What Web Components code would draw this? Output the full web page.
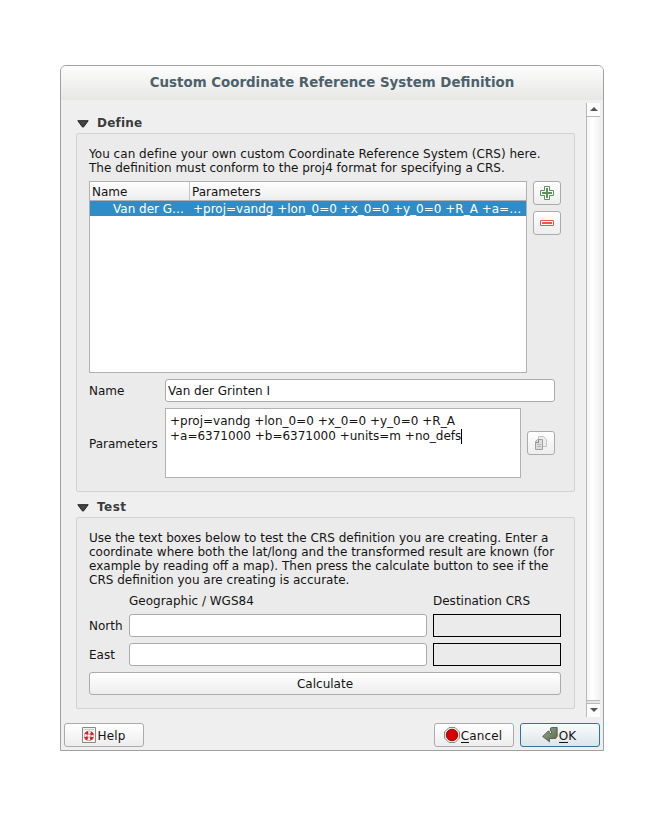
<!DOCTYPE html>
<html lang="en"><head><meta charset="utf-8"><title>Custom Coordinate Reference System Definition</title>
<style>
html,body{margin:0;background:#fff}
body{width:658px;height:816px;font:12px/14px "DejaVu Sans",sans-serif;color:#141414;box-sizing:border-box;padding:65px 0 0 60px;overflow:hidden}
.main{display:flex;height:618px;box-sizing:content-box;padding:2px 3px 0 15px;justify-content:space-between}
.content{width:499px;display:flex;flex-direction:column}
.line{display:block;white-space:nowrap;width:max-content}
.listrow{display:flex;gap:6px;margin-top:6px}
.side{display:flex;flex-direction:column;gap:6px}
.r{display:flex;align-items:center}
.r>.lab{flex:none;white-space:nowrap}
.foot{display:flex;padding:3px;gap:6px}
.foot .sp{flex:1}
.foot crs-button>span{padding:2px 1px 0 0;letter-spacing:.1px}
u{text-decoration:none;border-bottom:1px solid #141414;display:inline-block;height:13px}
</style></head><body>
<crs-window heading="Custom Coordinate Reference System Definition">
 <div class="main">
  <div class="content">
   <crs-group heading="Define" style="--h:359px">
    <span class="line" style="letter-spacing:.03px">You can define your own custom Coordinate Reference System (CRS) here.</span>
    <span class="line">The definition must conform to the proj4 format for specifying a CRS.</span>
    <div class="listrow">
     <crs-list></crs-list>
     <div class="side">
      <crs-button style="width:28px"><crs-icon name="plus"></crs-icon></crs-button>
      <crs-button style="width:28px"><crs-icon name="minus"></crs-icon></crs-button>
     </div>
    </div>
    <div class="r" style="margin-top:6px"><span class="lab" style="width:76px">Name</span><crs-field style="width:390px">Van der Grinten I</crs-field></div>
    <div class="r" style="margin-top:6px"><span class="lab" style="width:76px;padding-top:1px;box-sizing:border-box">Parameters</span><crs-text>
      <span class="line">+proj=vandg +lon_0=0 +x_0=0 +y_0=0 +R_A</span><span class="line">+a=6371000 +b=6371000 +units=m +no_defs</span></crs-text>
     <crs-button style="width:28px;margin-left:6px"><crs-icon name="copy"></crs-icon></crs-button></div>
   </crs-group>
   <crs-group heading="Test" style="--h:192px;margin-top:9px">
    <span class="line">Use the text boxes below to test the CRS definition you are creating. Enter a</span>
    <span class="line">coordinate where both the lat/long and the transformed result are known (for</span>
    <span class="line">example by reading off a map). Then press the calculate button to see if the</span>
    <span class="line">CRS definition you are creating is accurate.</span>
    <div class="r" style="margin-top:7px"><span class="lab" style="width:304px;padding-left:40px">Geographic / WGS84</span><span class="lab">Destination CRS</span></div>
    <div class="r" style="margin-top:6px"><span class="lab" style="width:40px">North</span><crs-field style="width:298px"></crs-field><crs-field readonly style="width:128px;margin-left:6px"></crs-field></div>
    <div class="r" style="margin-top:6px"><span class="lab" style="width:40px">East</span><crs-field style="width:298px"></crs-field><crs-field readonly style="width:128px;margin-left:6px"></crs-field></div>
    <crs-button style="width:472px;height:23px;margin-top:6px">Calculate</crs-button>
   </crs-group>
  </div>
  <crs-scroll></crs-scroll>
 </div>
 <div class="foot">
  <crs-button style="width:80px"><crs-icon name="help"></crs-icon><span>Help</span></crs-button><span class="sp"></span>
  <crs-button style="width:80px"><crs-icon name="cancel"></crs-icon><span><u>C</u>ancel</span></crs-button>
  <crs-button primary style="width:80px"><crs-icon name="ok"></crs-icon><span><u>O</u>K</span></crs-button>
 </div>
</crs-window>
<script>
const define=(name,render)=>customElements.define(name,class extends HTMLElement{
 constructor(){super();this.attachShadow({mode:'open'}).innerHTML=render(this)}
});
define('crs-window',e=>`<style>
:host{display:block;box-sizing:border-box;width:544px;height:686px;border:1px solid #a0a0a0;border-radius:6px 6px 0 0;background:#efefef;overflow:hidden}
header{height:34px;box-sizing:border-box;padding-bottom:1px;background:linear-gradient(#fdfdfd,#e7e7e5);display:flex;align-items:center;justify-content:center;font-weight:bold;font-size:13.38px;color:#4b616c}
</style><header>${e.getAttribute('heading')}</header><slot></slot>`);
define('crs-group',e=>`<style>
:host{display:block}
h2{margin:0;height:31px;font-size:12px;letter-spacing:.2px;line-height:14px;display:flex;align-items:center;box-sizing:border-box;padding:10px 0 0 1px;gap:8px;color:#3b3b3b}
h2 svg{margin-top:2px}
:host([heading=Test]) h2{height:16px;padding-top:0;padding-bottom:4px}
:host([heading=Test]) h2 span{letter-spacing:.5px}
section{box-sizing:border-box;height:var(--h);border:1px solid #d2d2d2;border-radius:2px;background:#ebebeb;padding:13px 12px 0;white-space:nowrap}
</style><h2><svg width="12" height="8"><path d="M.8.7H11.2L6.8 6.7Q6 7.6 5.2 6.7Z" fill="#444" stroke="#222"/></svg><span>${e.getAttribute('heading')}</span></h2><section><slot></slot></section>`);
define('crs-list',()=>`<style>
:host{display:block;box-sizing:border-box;width:438px;height:192px;background:#fff;border:1px solid #b1b1b1}
div{display:grid;grid-template-columns:100px 1fr;line-height:15px}
.h{height:18px;background:linear-gradient(#fff,#ededed);border-bottom:1px solid #b1b1b1}
.h span{padding:3px 0 0 2px;height:15px}.h span:first-child{border-right:1px solid #c4c4c4}
.s{background:#308cc6;color:#fff;height:15px;line-height:17px}
.s span{white-space:nowrap}.s span:first-child{padding-left:23px}.s span:last-child{padding-left:3px}
</style><div class="h"><span>Name</span><span>Parameters</span></div><div class="s"><span>Van der G…</span><span>+proj=vandg +lon_0=0 +x_0=0 +y_0=0 +R_A +a=…</span></div>`);
define('crs-button',()=>`<style>
:host{display:flex;flex:none;box-sizing:border-box;height:24px;border:1px solid #ababab;border-radius:3px;background:linear-gradient(#fff,#ededed);align-items:center;justify-content:center;gap:1px}
:host([primary]){border-color:#2a77a6;background:linear-gradient(#f9fbfc,#dce5ea)}
</style><slot></slot>`);
define('crs-field',()=>`<style>
:host{display:block;flex:none;box-sizing:border-box;height:23px;border:1px solid #ababab;border-radius:3px;background:#fff;padding:4px 2px}
:host([readonly]){border:1px solid #000;border-radius:0;background:#ebebeb}
</style><slot></slot>`);
define('crs-text',()=>`<style>
:host{display:block;flex:none;box-sizing:border-box;width:356px;height:70px;border:1px solid #b1b1b1;background:#fff;padding:5px 4px;line-height:15px}
::slotted(span:last-child){border-right:1px solid #000}
</style><slot></slot>`);
define('crs-scroll',()=>`<style>
:host{display:flex;flex-direction:column;box-sizing:border-box;width:14px;height:614px;margin-top:1px;border-left:1px solid #b9b9b9;background:linear-gradient(90deg,#f4f4f4,#fff 40%,#f2f2f2)}
.c{height:13px;box-sizing:border-box;padding-bottom:2px;display:flex;align-items:center;justify-content:center;background:#fcfcfc}
.t{flex:1;border:solid #b9b9b9;border-width:1px 0}.g{height:2px;background:#e6e6e6;border-bottom:1px solid #b9b9b9}
</style><div class="c"><svg width="8" height="4"><path d="M0 4L4 0L8 4Z" fill="#555"/></svg></div><div class="t"></div><div class="g"></div><div class="c"><svg width="8" height="4"><path d="M0 0H8L4 4Z" fill="#555"/></svg></div>`);
const icons={
plus:`<path d="M5.500 1.500h5v4h4v5h-4v4h-5v-4h-4v-5h4z" fill="#fff" stroke="#5c905c"/><path d="M8 3v10M3 8h10" stroke="#5c905c" stroke-width="2"/>`,
minus:`<path d="M1.500 5.500h13v5h-13z" fill="#fff" stroke="#e55"/><path d="M3 8h10" stroke="#e55" stroke-width="2"/>`,
copy:`<path d="M5.500 1.500h5l3 3v7h-8z" fill="#eee" stroke="#c4c4c4"/><path d="M2.500 6.500l2-2h5v10h-7z" fill="#ddd" stroke="#a0a0a0"/><path d="M5.500 5v2.500H3" fill="none" stroke="#888"/><path d="M4 9.500h4M4 11.500h4" fill="none" stroke="#b5b5b5"/>`,
help:`<path d="M1.500 .5h13v15h-13z" fill="#f4f4f0" stroke="#888"/><path d="M3 2.500h10" stroke="#ccc"/><circle cx="8" cy="8.800" r="3.400" fill="#fff" stroke="#999" stroke-width="3.400"/><circle cx="8" cy="8.800" r="3.400" fill="#fff" stroke="#f2f2f2" stroke-width="2.200"/><circle cx="8" cy="8.800" r="3.500" fill="none" stroke="#d82020" stroke-width="3" stroke-dasharray="2.900 2.600" stroke-dashoffset="-1.300" transform="rotate(0 8 8.800)"/><circle cx="8" cy="8.800" r="1.600" fill="none" stroke="#a66" stroke-width=".6"/>`,
cancel:`<path d="M5 .5h6L15.500 5v6L11 15.500H5L.5 11V5z" fill="#e8e8e3" stroke="#888"/><circle cx="8" cy="8" r="5.700" fill="#d80000" stroke="#a80000"/>`,
ok:`<defs><linearGradient id="g" x2="1" y2="1"><stop stop-color="#99a889"/><stop offset="1" stop-color="#566649"/></linearGradient></defs><path d="M8.500 1l1-.5h5.700v8.700l-1.600 2.300H7.500v3.300L.6 9.500 6 4.200h1.300V6.500h2.200V4H8.500z" fill="url(#g)" stroke="#46523e" stroke-width=".8"/>`};
define('crs-icon',e=>`<style>:host{display:block;width:16px;height:16px;margin-left:-1px}:host([name=plus]),:host([name=minus]),:host([name=copy]){margin-left:0}svg{display:block}</style><svg width="16" height="16" viewBox="0 0 16 16">${icons[e.getAttribute('name')]}</svg>`);
</script></body></html>
